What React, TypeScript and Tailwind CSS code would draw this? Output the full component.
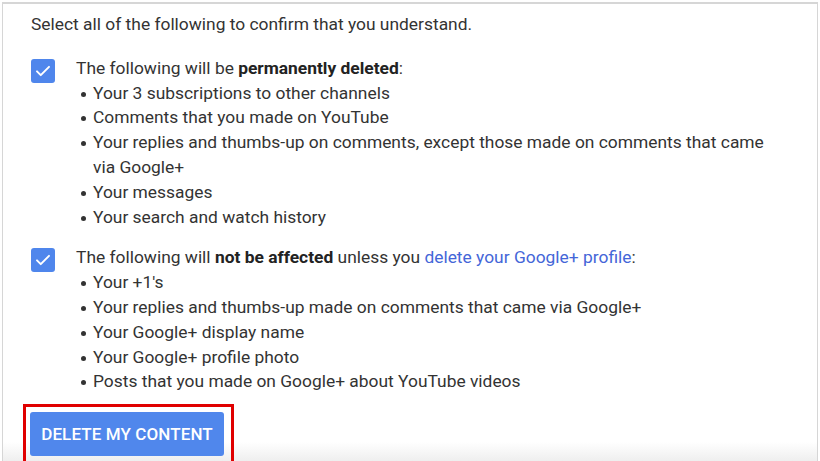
import React from "react";

const Check = () => (
  <div className="w-6 h-6 rounded-[3px] bg-[#4f86ec] flex items-center justify-center shrink-0">
    <svg width="18" height="18" viewBox="0 0 24 24" fill="none">
      <path d="M4 12.5l5 5L20 6.5" stroke="white" strokeWidth="2.6" strokeLinecap="round" strokeLinejoin="round" />
    </svg>
  </div>
);

const Item = ({ children }: { children: React.ReactNode }) => (
  <li className="flex">
    <span className="w-[17px] shrink-0 pl-[5px] pt-[11px]">
      <span className="block w-[5px] h-[5px] rounded-full bg-[#333]" />
    </span>
    <span>{children}</span>
  </li>
);

export default function App() {
  const deleted = [
    "Your 3 subscriptions to other channels",
    "Comments that you made on YouTube",
    "Your replies and thumbs-up on comments, except those made on comments that came via Google+",
    "Your messages",
    "Your search and watch history",
  ];
  const kept = [
    "Your +1's",
    "Your replies and thumbs-up made on comments that came via Google+",
    "Your Google+ display name",
    "Your Google+ profile photo",
    "Posts that you made on Google+ about YouTube videos",
  ];
  return (
    <div className="w-[820px] h-[461px] overflow-hidden bg-white pt-[2px] px-[2px] font-['Roboto',sans-serif] text-[#333] text-[17.4px] leading-[24.8px]">
      <div className="h-[470px] border-t-2 border-x border-[#d6d6d6] bg-[linear-gradient(to_bottom,#fff_438px,#ebebeb_461px)] pl-[28px] pr-[40px] pt-[8px]">
        <p>Select all of the following to confirm that you understand.</p>

        <div className="flex gap-[21px] mt-[21px]">
          <div className="pt-[1px]">
            <Check />
          </div>
          <div className="mt-[-2px]">
            <p>
              The following will be <b className="font-bold text-[#222]">permanently deleted</b>:
            </p>
            <ul>
              {deleted.map((t) => (
                <Item key={t}>{t}</Item>
              ))}
            </ul>
          </div>
        </div>

        <div className="flex gap-[21px] mt-[18px]">
          <div className="pt-[1px]">
            <Check />
          </div>
          <div className="mt-[-2px]">
            <p>
              The following will <b className="font-bold text-[#222]">not be affected</b> unless you{" "}
              <a className="text-[#4466d8]">delete your Google+ profile</a>:
            </p>
            <ul>
              {kept.map((t) => (
                <Item key={t}>{t}</Item>
              ))}
            </ul>
          </div>
        </div>

        <div className="mt-[10px] ml-[-8px] w-[211px] border-[3px] border-[#e00000] pl-[4px] pt-[5px] pb-[8px]">
          <button className="w-[194px] h-[44px] rounded-[3px] bg-[#5087ec] text-white font-medium text-[17px] tracking-[0.1px]">
            DELETE MY CONTENT
          </button>
        </div>
      </div>
    </div>
  );
}
